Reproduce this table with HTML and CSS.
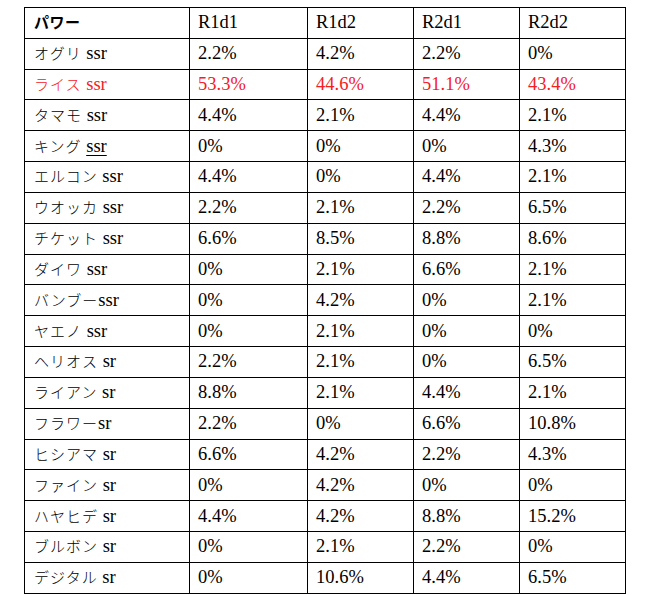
FILE: index.html
```html
<!DOCTYPE html>
<html lang="ja">
<head>
<meta charset="utf-8">
<title>パワー</title>
<link rel="stylesheet" href="styles.css">
</head>
<body>
<table class="grid">
  <colgroup>
    <col class="c-name"><col class="c-a"><col class="c-b"><col class="c-b"><col class="c-b">
  </colgroup>
  <tr><th class="name"><span class="kana bold">パワー</span></th><td>R1d1</td><td>R1d2</td><td>R2d1</td><td>R2d2</td></tr>
  <tr><td class="name"><span class="kana">オグリ</span> ssr</td><td>2.2%</td><td>4.2%</td><td>2.2%</td><td>0%</td></tr>
  <tr class="hl"><td class="name"><span class="kana">ライス</span> ssr</td><td>53.3%</td><td>44.6%</td><td>51.1%</td><td>43.4%</td></tr>
  <tr><td class="name"><span class="kana">タマモ</span> ssr</td><td>4.4%</td><td>2.1%</td><td>4.4%</td><td>2.1%</td></tr>
  <tr><td class="name"><span class="kana">キング</span> <u>ssr</u></td><td>0%</td><td>0%</td><td>0%</td><td>4.3%</td></tr>
  <tr><td class="name"><span class="kana">エルコン</span> ssr</td><td>4.4%</td><td>0%</td><td>4.4%</td><td>2.1%</td></tr>
  <tr><td class="name"><span class="kana">ウオッカ</span> ssr</td><td>2.2%</td><td>2.1%</td><td>2.2%</td><td>6.5%</td></tr>
  <tr><td class="name"><span class="kana">チケット</span> ssr</td><td>6.6%</td><td>8.5%</td><td>8.8%</td><td>8.6%</td></tr>
  <tr><td class="name"><span class="kana">ダイワ</span> ssr</td><td>0%</td><td>2.1%</td><td>6.6%</td><td>2.1%</td></tr>
  <tr><td class="name"><span class="kana">バンブー</span>ssr</td><td>0%</td><td>4.2%</td><td>0%</td><td>2.1%</td></tr>
  <tr><td class="name"><span class="kana">ヤエノ</span> ssr</td><td>0%</td><td>2.1%</td><td>0%</td><td>0%</td></tr>
  <tr><td class="name"><span class="kana">ヘリオス</span> sr</td><td>2.2%</td><td>2.1%</td><td>0%</td><td>6.5%</td></tr>
  <tr><td class="name"><span class="kana">ライアン</span> sr</td><td>8.8%</td><td>2.1%</td><td>4.4%</td><td>2.1%</td></tr>
  <tr><td class="name"><span class="kana">フラワー</span>sr</td><td>2.2%</td><td>0%</td><td>6.6%</td><td>10.8%</td></tr>
  <tr><td class="name"><span class="kana">ヒシアマ</span> sr</td><td>6.6%</td><td>4.2%</td><td>2.2%</td><td>4.3%</td></tr>
  <tr><td class="name"><span class="kana">ファイン</span> sr</td><td>0%</td><td>4.2%</td><td>0%</td><td>0%</td></tr>
  <tr><td class="name"><span class="kana">ハヤヒデ</span> sr</td><td>4.4%</td><td>4.2%</td><td>8.8%</td><td>15.2%</td></tr>
  <tr><td class="name"><span class="kana">ブルボン</span> sr</td><td>0%</td><td>2.1%</td><td>2.2%</td><td>0%</td></tr>
  <tr><td class="name"><span class="kana">デジタル</span> sr</td><td>0%</td><td>10.6%</td><td>4.4%</td><td>6.5%</td></tr>
</table>
</body>
</html>
```

FILE: styles.css
```css
html, body {
  margin: 0;
  padding: 0;
  background: #ffffff;
}

body {
  padding: 7px 0 0 24px;
  font-family: "Liberation Serif", "Noto Sans CJK JP", serif;
  font-size: 18.5px;
  color: #000;
}

.grid {
  border-collapse: collapse;
  table-layout: fixed;
  width: 602px;
}

.c-name { width: 165px; }
.c-a { width: 118px; }
.c-b { width: 106px; }

.grid tr {
  height: 30.84px;
}

.grid td,
.grid th {
  border: 1px solid #000;
  padding: 0 8px;
  text-align: left;
  vertical-align: middle;
  font-weight: normal;
  white-space: nowrap;
  line-height: 1.15;
}

.grid .name {
  padding-left: 9px;
}

.kana {
  font-family: "Noto Sans CJK JP", sans-serif;
  font-size: 15px;
  letter-spacing: 1px;
  font-weight: 300;
}

.kana.bold {
  font-weight: 700;
  letter-spacing: 0.5px;
}

.hl td {
  color: #f5201e;
}

u {
  text-underline-offset: 3px;
}
```
